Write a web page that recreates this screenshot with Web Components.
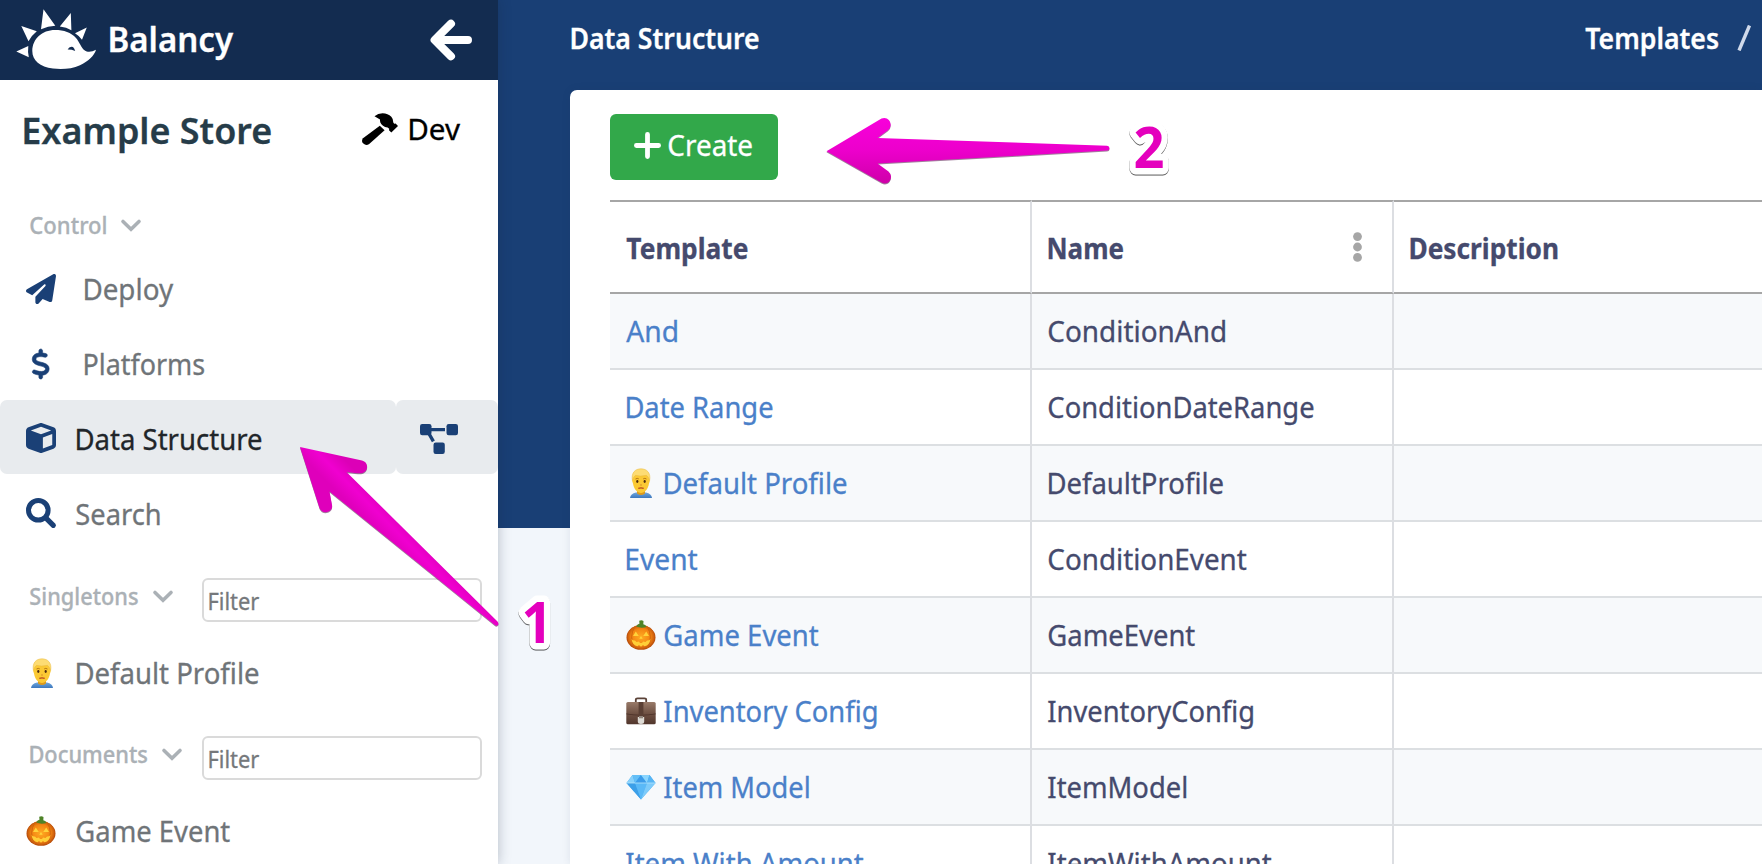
<!DOCTYPE html>
<html lang="en">
<head>
<meta charset="utf-8">
<title>Balancy – Data Structure</title>
<style>
html,body{margin:0;height:100%;overflow:hidden}
body{font-family:"Noto Sans","Open Sans",sans-serif;background:#f2f6fb}
</style>
</head>
<body>
<balancy-app></balancy-app>
<script>
const ICONS = {
  logo: ['14 6 84 64', '<g fill="#fff"><path d="M96 48.8C94.500 54.500 88 60.500 80 64.200C72 68 62 68.600 53 67.600C40 66 32.300 59.500 32.300 50C32.300 38 42 29 55 29C64 29 71 31.500 76 37C79.500 41 81 46.500 84.500 49.300C88 51.800 92 50.800 96 48.800Z"/><path d="M43.500 8.300L55.300 24.800Q48 25 41 28.200ZM70.800 12L71.400 29.200Q66.500 26.400 59.800 25.600ZM86.800 26.600L82 38.800Q79.300 34.800 75 32.200ZM21.300 25L36.800 30.200Q31.500 34.400 28.500 40.300ZM16.300 50.600L28.300 45Q27.600 50.500 28.800 56.300Z"/></g><path d="M67.600 48.600Q69.500 44.800 73 46Q74.500 47.500 75.200 50Q71.500 48.500 67.600 48.600Z" fill="#132c50"/>'],
  back: ['430 20 42 40', '<path d="M468 40H435M451 23.700L434.600 40L451 56.300" fill="none" stroke="currentColor" stroke-width="8" stroke-linecap="round" stroke-linejoin="round"/>'],
  hammer: ['0 0 36 32', '<g fill="currentColor"><path d="M12.500 3.200Q16 .2 20.500 .2Q26 .2 29.300 3.800Q31.600 6.300 31.300 9.600L32.200 10.800L33.600 10.600L36 13L29.300 19.600L27 17.200L27.200 15.800L25.600 14.600Q22.800 14.600 21 12.800L19.400 11.200Q18 9.800 18 7.800V6.500Z"/><path d="M17.800 12.800L22.600 17.300L7.200 31Q4 33 1.400 30.600T1 25.200Z"/></g>'],
  chevron: ['0 0 20 13', '<path d="M2 2.500L10 10.200L18 2.500" fill="none" stroke="currentColor" stroke-width="3.600" stroke-linecap="round" stroke-linejoin="miter"/>'],
  plane: ['0 0 512 512', '<path fill="currentColor" d="M498.100 5.600c10.100 7 15.400 19.100 13.500 31.200l-64 416c-1.500 9.700-7.400 18.200-16 23s-18.900 5.400-28 1.600L284 427.700l-68.500 74.100c-8.900 9.700-22.900 12.900-35.200 8.100S160 493.200 160 480V396.400c0-4 1.500-7.800 4.200-10.700L331.800 202.800c5.800-6.300 5.600-16-.4-22s-15.700-6.400-22-.7L106 360.800 17.700 316.600C7.100 311.300.3 300.700 0 288.900s5.900-22.800 16.100-28.700l448-256c10.700-6.100 23.900-5.500 34 1.400z"/>'],
  dollar: ['10 0 300 512', '<path fill="currentColor" stroke="currentColor" stroke-width="10" d="M160 0c17.700 0 32 14.300 32 32V67.700c1.600 .2 3.100 .4 4.700 .7c.4 .1 .7 .1 1.100 .2l48 8.800c17.400 3.200 28.900 19.900 25.700 37.200s-19.900 28.900-37.200 25.700l-47.500-8.700c-31.300-4.600-58.900-1.500-78.300 6.200s-27.200 18.300-29 28.100c-2 10.700-.5 16.700 1.200 20.400c1.800 3.900 5.500 8.300 12.800 13.200c16.300 10.700 41.300 17.700 73.700 26.300l2.900 .8c28.600 7.600 63.600 16.800 89.600 33.800c14.200 9.300 27.600 21.900 35.900 39.500c8.500 17.900 10.300 37.900 6.400 59.200c-6.900 38-33.100 63.400-65.600 76.700c-13.700 5.600-28.600 9.200-44.400 11V480c0 17.700-14.300 32-32 32s-32-14.300-32-32V445.100c-.4-.1-.9-.1-1.300-.2l-.2 0c-24.400-3.800-64.500-14.300-91.500-26.300c-16.100-7.200-23.400-26.100-16.200-42.200s26.100-23.400 42.200-16.200c20.900 9.300 55.300 18.500 75.200 21.600c31.900 4.700 58.200 2 76-5.300c16.900-6.900 24.600-16.900 26.800-28.900c1.900-10.600 .4-16.700-1.300-20.400c-1.900-4-5.600-8.400-13-13.300c-16.400-10.700-41.500-17.700-74-26.300l-2.800-.7C119.400 279.300 84.400 270 58.400 253c-14.200-9.300-27.500-22-35.800-39.600c-8.400-17.900-10.100-37.900-6.100-59.200C23.700 116 52.300 91.200 84.800 78.300c13.300-5.300 27.900-8.900 43.200-11V32c0-17.700 14.300-32 32-32z"/>'],
  cube: ['0 0 512 512', '<path fill="currentColor" d="M234.500 5.700c13.900-5 29.100-5 43.100 0l192 68.600C495 83.400 512 107.500 512 134.600V377.400c0 27-17 51.200-42.500 60.300l-192 68.600c-13.900 5-29.100 5-43.100 0l-192-68.600C17 428.600 0 404.500 0 377.400V134.600c0-27 17-51.200 42.500-60.300l192-68.600zM256 66L82.300 128 256 190l173.700-62L256 66zm32 368.600l160-57.100v-188L288 246.600v188z"/>'],
  diagram: ['0 0 38 30', '<g fill="currentColor"><rect width="11.500" height="11.300" rx="2.200"/><rect x="26.500" width="11.500" height="11.300" rx="2.200"/><rect x="13.500" y="18.500" width="11.300" height="11.500" rx="2.200"/></g><path d="M9 5.600H25M8 8L13.400 17.300" stroke="currentColor" stroke-width="3.400" fill="none"/>'],
  search: ['0 0 30 30', '<circle cx="12.300" cy="12.300" r="9.800" fill="none" stroke="currentColor" stroke-width="5"/><path d="M19.800 19.800L27.300 27.300" stroke="currentColor" stroke-width="5.200" stroke-linecap="round"/>'],
  plus: ['0 0 27 27', '<path d="M13.500 2.400V24.600M2.400 13.500H24.600" stroke="currentColor" stroke-width="4.800" stroke-linecap="round"/>'],
  kebab: ['0 0 9 30', '<g fill="#a6a6a6"><circle cx="4.500" cy="4.600" r="4.400"/><circle cx="4.500" cy="15" r="4.400"/><circle cx="4.500" cy="25.400" r="4.400"/></g>'],
  man: ['0 0 30 30', '<defs><linearGradient id="s" x2="0" y2="1"><stop stop-color="#6ea6df"/><stop offset="1" stop-color="#3d78bd"/></linearGradient></defs><path d="M4 30Q4.500 25.500 10 24.500H20Q25.500 25.500 26 30Z" fill="url(#s)"/><path d="M11 22H19V25.500Q15 28.500 11 25.500Z" fill="#dc9a1c"/><path d="M6.700 11Q6.700 4.500 15 4.500T23.300 11Q24.600 13 23 15.500C22 21.500 18.500 25 15 25S8 21.500 7 15.500Q5.400 13 6.700 11Z" fill="#fbc934"/><path d="M6.400 12.500C5 5 9 .8 15 .8S25 5 23.600 12.500Q22.500 8.500 20.500 7.300Q14 8.800 9.500 7.300Q7.200 9 6.400 12.500Z" fill="#fddc73" stroke="#e9b83c" stroke-width=".5"/><path d="M9.500 11Q11.300 9.800 12.800 10.900M17.200 10.900Q18.700 9.800 20.500 11" fill="none" stroke="#b77718" stroke-width="1"/><g fill="#4e2c10"><ellipse cx="11.300" cy="13.500" rx="1.100" ry="1.400"/><ellipse cx="18.700" cy="13.500" rx="1.100" ry="1.400"/></g><path d="M14 17H16" stroke="#d9912b" stroke-width="1.200"/><path d="M12.300 20.300Q15 19.500 17.700 20.300" stroke="#b8461d" stroke-width="1.300" fill="none"/>'],
  pumpkin: ['0 0 30 30', '<defs><radialGradient id="p"><stop stop-color="#ffab22"/><stop offset=".7" stop-color="#f38412"/><stop offset="1" stop-color="#c85a0c"/></radialGradient></defs><ellipse cx="15" cy="17.500" rx="14.500" ry="12.300" fill="#b94f0b"/><ellipse cx="15" cy="17" rx="13.700" ry="11.900" fill="url(#p)"/><path d="M9 6.500Q2.500 16 8.500 28M21 6.500Q27.500 16 21.500 28" stroke="#cf650c" stroke-width="1" fill="none"/><path d="M10 6.500Q12 3.500 13.500 3.800L13.200 .8Q15.500-.3 17.500 1L17.300 4.200Q19.500 4.500 20.500 7Q15 8.500 10 6.500Z" fill="#4e8328"/><path d="M9.800 11.500L12.800 16H7ZM20.200 11.500L23 16H17.200ZM15 16L16.700 18.700H13.300Z" fill="#ffd23b"/><path d="M5.500 19Q7 20.800 9 20.500L10.500 22L13 21.600L14 23H16L17 21.600L19.500 22L21 20.500Q23 20.800 24.500 19Q23.500 25.500 18.500 26.200L17 25L15 26.800L13 25L11.500 26.200Q6.500 25.500 5.500 19Z" fill="#ffcf37"/>'],
  briefcase: ['0 0 30 30', '<defs><linearGradient id="b" x2="0" y2="1"><stop stop-color="#987a69"/><stop offset=".5" stop-color="#705244"/><stop offset="1" stop-color="#51362c"/></linearGradient></defs><path d="M9.800 7V3.800Q9.800 2.300 11.500 2.300H18.500Q20.200 2.300 20.200 3.800V7" fill="none" stroke="#5b4238" stroke-width="1.800"/><rect x=".3" y="6" width="29.400" height="22.300" rx="1.600" fill="url(#b)"/><path d="M.3 17.500Q15 20 29.700 17.500V18.300Q15 20.800 .3 18.300Z" fill="#4a3027"/><rect x="12.600" y="6" width="4.800" height="16" fill="#5a3f34"/><path d="M11.800 21H18.200V25.500Q18.200 28 15 28T11.800 25.500Z" fill="#dedbd5"/><rect x="13" y="20" width="4" height="2.300" fill="#91857c"/>'],
  gem: ['0 0 30 30', '<path d="M6.500 3H23.500L29.500 11L15 27.500L.5 11Z" fill="#44a9ee"/><path d="M6.500 3L9 11H.5Z" fill="#88d1fb"/><path d="M6.500 3H15L9 11Z" fill="#64bff7"/><path d="M15 3L21 11H9Z" fill="#3c9cea"/><path d="M15 3H23.500L21 11Z" fill="#8ad6ff"/><path d="M23.500 3L29.500 11H21Z" fill="#57b5f4"/><path d="M.5 11H9L15 27.500Z" fill="#3c9fe8"/><path d="M9 11H21L15 27.500Z" fill="#5ab9f7"/><path d="M21 11H29.500L15 27.500Z" fill="#7dcbfa"/><path d="M.5 11H29.500" stroke="#b5e4fd" stroke-width=".8"/>']
};

/* Inline icon; size comes from the w and h attributes. */
customElements.define('app-icon', class extends HTMLElement {
  connectedCallback() {
    const [box, body] = ICONS[this.getAttribute('name')];
    const w = this.getAttribute('w'), h = this.getAttribute('h');
    this.attachShadow({mode: 'open'}).innerHTML =
      `<style>:host{display:block;flex:none;width:${w}px;height:${h}px}svg{display:block;overflow:visible}</style>
       <svg width="${w}" height="${h}" viewBox="${box}" preserveAspectRatio="none" aria-hidden="true">${body}</svg>`;
  }
});

/* One line of text condensed to the width w; its box is as high as a capital letter. */
const pen = document.createElement('canvas').getContext('2d');
customElements.define('fit-text', class extends HTMLElement {
  connectedCallback() {
    const size = +(this.getAttribute('size') || 29), weight = this.getAttribute('weight') || 400;
    const w = +this.getAttribute('w');
    pen.font = `${weight} ${size}px "Noto Sans"`;
    const m = pen.measureText(this.textContent);
    const k = w / (m.actualBoundingBoxRight + m.actualBoundingBoxLeft);
    this.attachShadow({mode: 'open'}).innerHTML =
      `<style>:host{display:block;flex:none;width:${w}px;height:${size * .714}px;font:${weight} ${size}px/${size * .714}px "Noto Sans",sans-serif;white-space:nowrap;-webkit-text-stroke:.3px currentColor}
       span{display:block;width:max-content;transform-origin:0 0;transform:translate(${m.actualBoundingBoxLeft * k - .7}px,${1 - size * .031}px) scaleX(${k})}</style><span><slot></slot></span>`;
  }
});

customElements.define('nav-item', class extends HTMLElement {
  connectedCallback() {
    const a = n => this.getAttribute(n);
    this.attachShadow({mode: 'open'}).innerHTML =
      `<style>:host{display:flex;height:${a('h')}px;color:#6f7478}
       .main,.side{display:flex;align-items:center;box-sizing:border-box}
       .main{flex:1}.ico{width:${a('gap') || 77}px;display:flex;box-sizing:border-box;padding-left:${a('ix') || 26}px;color:#1a4076;flex:none}
       .side{display:none;width:102px;padding:4px 0 0 24px;color:#1a4076}
       :host([active]){color:#212529}:host([active]) .main,:host([active]) .side{background:#e8ebee;border-radius:7px}
       :host([active]) .ico{margin-top:2px}
       :host([active]) .side{display:flex}:host([active]) ::slotted(fit-text){margin-top:4px}</style>
       <div class="main"><div class="ico"><app-icon name="${a('icon')}" w="${a('iw') || 30}" h="${a('ih') || 30}"></app-icon></div><slot></slot></div>
       <div class="side"><slot name="side"></slot></div>`;
  }
});

customElements.define('nav-section', class extends HTMLElement {
  connectedCallback() {
    this.attachShadow({mode: 'open'}).innerHTML =
      `<style>:host{display:flex;box-sizing:border-box;height:44px;padding:0 16px 0 31px;color:#abb1b6}
       .label{display:flex;gap:13.500px;padding-top:10px;height:17px;align-items:center}
       .filter{margin-left:auto;width:280px;box-sizing:border-box;border:2px solid #dadada;border-radius:6px;background:#fff;color:#75787b;padding:13px 0 0 6px}
       :host([plain]) .filter{display:none}</style>
       <div class="label"><slot></slot><app-icon name="chevron" w="20" h="13"></app-icon></div>
       <div class="filter"><fit-text size="23" w="50.500">Filter</fit-text></div>`;
  }
});

customElements.define('side-bar', class extends HTMLElement {
  connectedCallback() {
    this.attachShadow({mode: 'open'}).innerHTML =
      `<style>:host{display:flex;flex-direction:column;width:498px;height:864px;flex:none;background:#fff;box-shadow:0 0 12px rgba(20,35,60,.28);z-index:1;overflow:hidden}
       header{height:80px;background:#132c50;color:#fff;display:flex;align-items:center;padding:0 26px 0 14px;box-sizing:border-box;flex:none}
       header app-icon:first-child{margin-top:-3px}
       header fit-text{margin:-3px 0 0 13px}header app-icon:last-child{margin-left:auto}
       .store{height:101px;display:flex;align-items:center;padding:0 37px 0 24.500px;color:#263c49;flex:none}
       .dev{margin-left:auto;display:flex;align-items:center;gap:12.500px;color:#000;margin-top:-2px}
       .dev app-icon{margin-top:-2px}
       nav{display:flex;flex-direction:column}nav>*{flex:none}</style>
       <header><app-icon name="logo" w="84" h="64"></app-icon><fit-text size="35" weight="600" w="123.500">Balancy</fit-text><app-icon name="back" w="42" h="40"></app-icon></header>
       <div class="store"><fit-text size="36.500" weight="600" w="246.500">Example Store</fit-text>
         <div class="dev"><app-icon name="hammer" w="36" h="32"></app-icon><fit-text w="51">Dev</fit-text></div></div>
       <nav>
         <nav-section plain style="margin:25.500px 0 -.5px"><fit-text size="23" weight="500" w="76">Control</fit-text></nav-section>
         <nav-item icon="plane" h="78" gap="84.500"><fit-text w="89">Deploy</fit-text></nav-item>
         <nav-item icon="dollar" h="72" gap="84.500" ix="32" iw="17.500"><fit-text w="120">Platforms</fit-text></nav-item>
         <nav-item icon="cube" h="74" active><fit-text w="185">Data Structure</fit-text><app-icon slot="side" name="diagram" w="38" h="30"></app-icon></nav-item>
         <nav-item icon="search" h="78"><fit-text w="83.500" style="margin-top:3px">Search</fit-text></nav-item>
         <nav-section style="margin-top:26px"><fit-text size="23" weight="500" w="108">Singletons</fit-text></nav-section>
         <nav-item icon="man" h="102" ix="27"><fit-text w="182">Default Profile</fit-text></nav-item>
         <nav-section style="margin-top:12px"><fit-text size="23" weight="500" w="117.500">Documents</fit-text></nav-section>
         <nav-item icon="pumpkin" h="102"><fit-text w="153.500">Game Event</fit-text></nav-item>
       </nav>`;
  }
});

customElements.define('data-table', class extends HTMLElement {
  connectedCallback() {
    const rows = [
      ['And', 51, '', 'ConditionAnd', 177],
      ['Date Range', 146, '', 'ConditionDateRange', 265],
      ['Default Profile', 182, 'man', 'DefaultProfile', 174.5],
      ['Event', 71, '', 'ConditionEvent', 198],
      ['Game Event', 154, 'pumpkin', 'GameEvent', 146.5],
      ['Inventory Config', 212.5, 'briefcase', 'InventoryConfig', 205],
      ['Item Model', 145, 'gem', 'ItemModel', 138.5],
      ['Item With Amount', 237, '', 'ItemWithAmount', 223]
    ];
    this.attachShadow({mode: 'open'}).innerHTML =
      `<style>:host{display:block;color:#454a6d}
       .row{display:grid;grid-template-columns:422px 362px 1fr;height:76px}
       .row>div{display:flex;align-items:center;padding-left:17px;box-sizing:border-box;border-right:2px solid #dcdee2;border-bottom:2px solid #dcdfe2}
       .row>div:last-child{border-right:0}
       .row.odd>div{background:#f7f9fb}
       .row:not(.head) fit-text{margin-top:1px}
       .head{height:94px}.row.head>div{border-top:2px solid #a6a6a6;border-bottom-color:#a6a6a6}
       .head fit-text{margin-top:3px}
       .row>div:nth-child(2){padding-left:16.500px}
       .link{color:#4a80c9}.link app-icon{margin-right:8.500px;margin-left:-1px}
       .head app-icon{margin:0 30px 0 auto}</style>
       <div class="row head"><div><fit-text weight="700" w="121">Template</fit-text></div><div><fit-text weight="700" w="74.500">Name</fit-text><app-icon name="kebab" w="9" h="30"></app-icon></div><div><fit-text weight="700" w="147">Description</fit-text></div></div>` +
      rows.map(([t, w, icon, n, nw], i) =>
        `<div class="row${i % 2 ? '' : ' odd'}"><div class="link">${icon ? `<app-icon name="${icon}" w="30" h="30"></app-icon>` : ''}<fit-text w="${w}">${t}</fit-text></div><div><fit-text w="${nw}">${n}</fit-text></div><div></div></div>`).join('');
  }
});

customElements.define('main-panel', class extends HTMLElement {
  connectedCallback() {
    this.attachShadow({mode: 'open'}).innerHTML =
      `<style>:host{display:block;flex:1;height:864px;overflow:hidden;background:linear-gradient(#193f75 528px,#f2f6fb 528px)}
       header{display:flex;height:76px;align-items:center;padding:0 10px 0 74px;color:#fff}
       .crumb{margin-left:auto;display:flex;align-items:center;gap:17px}
       .card{margin:14px 0 0 72px;background:#fff;border-radius:7px 0 0 0;padding:24px 0 0 40px;height:774px;box-sizing:border-box;box-shadow:0 0 8px rgba(30,50,90,.1)}
       button{display:flex;align-items:center;gap:7.500px;width:168px;height:66px;border:0;border-radius:6px;background:#32a84a;color:#fff;padding:0 0 3px 24px;margin:0 0 20px}
       button app-icon{margin-top:-1px}</style>
       <header><fit-text weight="600" w="187.500">Data Structure</fit-text><div class="crumb"><fit-text weight="600" w="133.500">Templates</fit-text><svg width="15.500" height="26"><path d="M2 25.500L12.500 .5" stroke="#d0daeb" stroke-width="3.400"/></svg></div></header>
       <div class="card"><button><app-icon name="plus" w="27" h="27"></app-icon><fit-text w="83.500">Create</fit-text></button><data-table></data-table></div>`;
  }
});

/* Callout arrows and step numbers drawn over the page. */
customElements.define('step-notes', class extends HTMLElement {
  connectedCallback() {
    this.attachShadow({mode: 'open'}).innerHTML =
      `<style>:host{position:absolute;inset:0;z-index:2;pointer-events:none}svg{display:block}
       text{font:700 57px "Noto Sans",sans-serif;fill:#e400bd;stroke:#fff;stroke-width:13px;stroke-linejoin:round;paint-order:stroke;filter:drop-shadow(0 1px .6px rgba(0,0,0,.65))}</style>
       <svg width="1762" height="864">
        <defs><linearGradient id="h" x1="0" y1="118" x2="0" y2="184" gradientUnits="userSpaceOnUse"><stop stop-color="#f800db"/><stop offset=".5" stop-color="#ec00cb"/><stop offset="1" stop-color="#ce00a8"/></linearGradient>
        <linearGradient id="d" x1="385" y1="500" x2="365" y2="520" gradientUnits="userSpaceOnUse"><stop stop-color="#dc00b7"/><stop offset=".5" stop-color="#f000d0"/><stop offset="1" stop-color="#df00bb"/></linearGradient></defs>
        <g style="filter:drop-shadow(0 1px .5px rgba(70,0,60,.5))">
        <path fill="url(#h)" d="M826.500 151.300L881.500 118.600C886 116.300 890.700 120 890.700 125Q890.700 128 888 130.300L877.500 138L1107 145.700Q1109.500 145.800 1109.500 148.200T1107 150.600L877.500 163.500L888.500 171.500Q891.200 174 891 177C890.500 182.500 886 185 881.500 182.500Z"/>
        <path fill="url(#d)" d="M300 447L362 460.500C369 462 369 472 361 473.200Q358 473.400 346.500 472L497.500 621.500Q499.300 623.700 497.800 625T494.800 625L329.500 491.500L332 505C333.500 512.500 322 515 319.500 508Z"/></g>
        <text x="1133.500" y="168" textLength="31" lengthAdjust="spacingAndGlyphs">2</text>
        <text x="521.500" y="643" textLength="31" lengthAdjust="spacingAndGlyphs">1</text>
       </svg>`;
  }
});

customElements.define('balancy-app', class extends HTMLElement {
  connectedCallback() {
    this.attachShadow({mode: 'open'}).innerHTML =
      `<style>:host{display:flex;position:relative;width:1762px;height:864px;overflow:hidden}</style>
       <side-bar></side-bar><main-panel></main-panel><step-notes></step-notes>`;
  }
});
</script>
</body>
</html>
